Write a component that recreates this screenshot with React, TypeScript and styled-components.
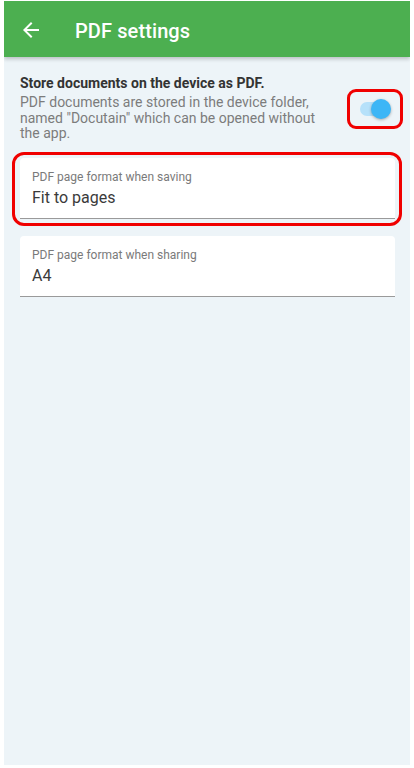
import React, { FC } from "react";
import styled, { createGlobalStyle } from "styled-components";

const GlobalStyle = createGlobalStyle`
  html, body {
    margin: 0;
    padding: 0;
    background: #ffffff;
    font-family: Roboto, "Noto Sans", Arial, sans-serif;
  }
`;

const Frame = styled.div`
  margin: 1px 4px 0 4px;
  width: 406px;
  height: 764px;
  background: #edf4f8;
  display: flex;
  flex-direction: column;
  overflow: hidden;
`;

const AppBar = styled.header`
  height: 56px;
  box-sizing: border-box;
  flex-shrink: 0;
  background: #4caf50;
  display: flex;
  align-items: center;
  padding: 2px 0 0 15px;
  box-shadow: 0 2px 4px rgba(0, 0, 0, 0.22);
  position: relative;
  z-index: 1;
`;

const BackButton = styled.button`
  width: 24px;
  height: 24px;
  padding: 0;
  border: none;
  background: transparent;
  display: flex;
  align-items: center;
  justify-content: center;
  color: #ffffff;
  cursor: pointer;
`;

const Title = styled.h1`
  margin: 1px 0 0 32px;
  font-size: 20px;
  font-weight: 500;
  color: #ffffff;
  letter-spacing: 0.1px;
`;

const Content = styled.main`
  padding: 17px 15px 0 16px;
  display: flex;
  flex-direction: column;
`;

const SettingRow = styled.div`
  display: flex;
  align-items: flex-start;
  justify-content: space-between;
`;

const SettingText = styled.div`
  width: 300px;
`;

const SettingTitle = styled.div`
  font-size: 14px;
  line-height: 18px;
  font-weight: 700;
  color: #333333;
`;

const SettingDescription = styled.div`
  margin-top: 3px;
  font-size: 14px;
  line-height: 15.5px;
  color: #7c7c7c;
`;

const Highlight = styled.div<{ $radius: number }>`
  border: 3px solid #f00000;
  border-radius: ${(p) => p.$radius}px;
`;

const ToggleHighlight = styled(Highlight)`
  margin-top: 15px;
  margin-right: -8px;
  width: 50px;
  height: 34px;
  display: flex;
  align-items: center;
  justify-content: center;
`;

const Switch = styled.div`
  position: relative;
  width: 32px;
  height: 20px;
  display: flex;
  align-items: center;
`;

const Track = styled.div<{ $on: boolean }>`
  width: 30px;
  height: 14px;
  margin-left: 1px;
  border-radius: 7px;
  background: ${(p) => (p.$on ? "#b6e1fa" : "#c8c8c8")};
`;

const Thumb = styled.div<{ $on: boolean }>`
  position: absolute;
  top: 0;
  left: ${(p) => (p.$on ? "12px" : "0")};
  width: 20px;
  height: 20px;
  border-radius: 50%;
  background: ${(p) => (p.$on ? "#3db6f6" : "#f1f1f1")};
  box-shadow: 0 1px 3px rgba(0, 0, 0, 0.3);
`;

const CardHighlight = styled(Highlight)`
  margin: 10px -7px -7px -8px;
  padding: 3px 4px 4px 5px;
`;

const Card = styled.div<{ $gap?: number }>`
  margin-top: ${(p) => p.$gap ?? 0}px;
  background: #ffffff;
  border-radius: 4px 4px 0 0;
  border-bottom: 1px solid #9a9a9a;
  padding: 11px 12px 10px 12px;
  box-sizing: border-box;
  height: 61px;
`;

const CardLabel = styled.div`
  font-size: 12px;
  line-height: 16px;
  color: #7a7a7a;
`;

const CardValue = styled.div`
  margin-top: 3px;
  font-size: 16px;
  line-height: 20px;
  color: #3a3a3a;
`;

const ArrowBack: FC = () => (
  <svg width="24" height="24" viewBox="0 0 24 24" fill="currentColor">
    <path d="M20 11H7.83l5.59-5.59L12 4l-8 8 8 8 1.41-1.41L7.83 13H20v-2z" />
  </svg>
);

const FormatField: FC<{ label: string; value: string; gap?: number }> = ({
  label,
  value,
  gap,
}) => (
  <Card $gap={gap}>
    <CardLabel>{label}</CardLabel>
    <CardValue>{value}</CardValue>
  </Card>
);

const App: FC = () => {
  const storeAsPdf = true;
  return (
    <>
      <GlobalStyle />
      <Frame>
        <AppBar>
          <BackButton aria-label="Back">
            <ArrowBack />
          </BackButton>
          <Title>PDF settings</Title>
        </AppBar>
        <Content>
          <SettingRow>
            <SettingText>
              <SettingTitle>Store documents on the device as PDF.</SettingTitle>
              <SettingDescription>
                PDF documents are stored in the device folder, named
                "Docutain" which can be opened without the app.
              </SettingDescription>
            </SettingText>
            <ToggleHighlight $radius={9}>
              <Switch>
                <Track $on={storeAsPdf} />
                <Thumb $on={storeAsPdf} />
              </Switch>
            </ToggleHighlight>
          </SettingRow>
          <CardHighlight $radius={12}>
            <FormatField
              label="PDF page format when saving"
              value="Fit to pages"
            />
          </CardHighlight>
          <FormatField
            label="PDF page format when sharing"
            value="A4"
            gap={17}
          />
        </Content>
      </Frame>
    </>
  );
};

export default App;
